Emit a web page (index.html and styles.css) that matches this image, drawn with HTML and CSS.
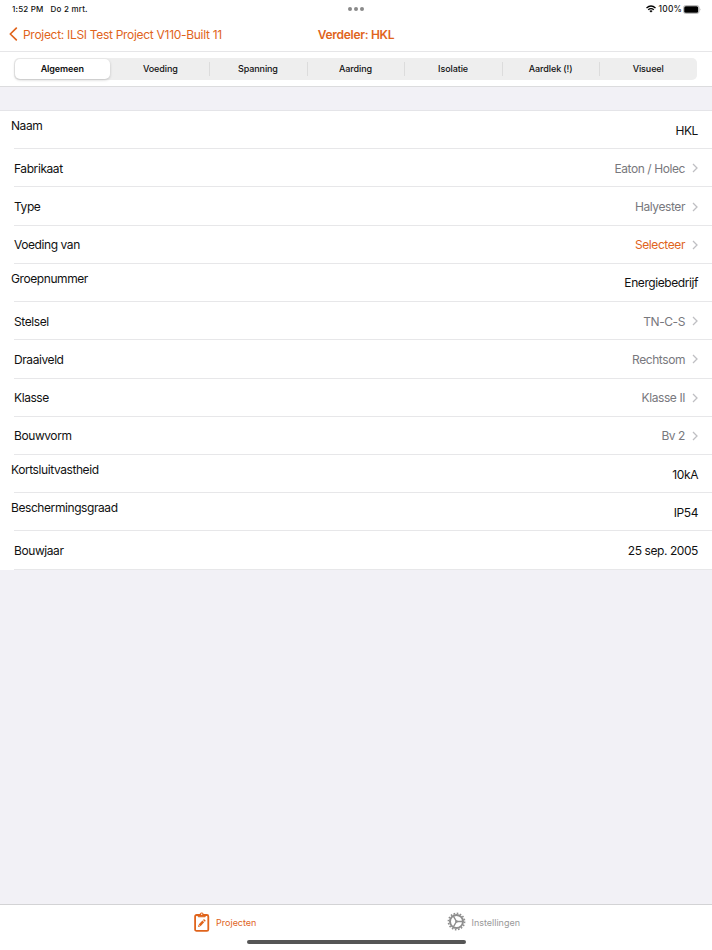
FILE: index.html
```html
<!DOCTYPE html>
<html lang="nl">
<head>
	<meta charset="UTF-8">
	<title>Verdeler: HKL</title>
	<link rel="stylesheet" href="styles.css">
</head>
<body>
	<div class="statusbar">
		<div class="time"><span class="clock">1:52 PM</span><span class="date">Do 2 mrt.</span></div>
		<div class="dots"><i></i><i></i><i></i></div>
		<div class="status">
			<svg class="wifi" width="10" height="8" viewBox="0 0 10 8" fill="none" stroke="#000" stroke-width="1.3">
				<path d="M0.5 3Q5 -1 9.5 3"/>
				<path d="M2.2 4.8Q5 2.4 7.8 4.8"/>
				<path d="M3.4 5.9Q5 4.7 6.6 5.9L5 7.6Z" fill="#000" stroke="none"/>
			</svg>
			<span class="percent">100%</span>
			<svg width="18" height="9" viewBox="0 0 18 9">
				<rect x="0.5" y="0.5" width="15.6" height="8" rx="2.2" fill="#fff" stroke="#aaa" stroke-width="0.8"/>
				<rect x="1.2" y="1.3" width="14" height="6.4" rx="1.5"/>
				<path d="M16.9 3.2Q18 4.5 16.9 5.8Z" fill="#999"/>
			</svg>
		</div>
	</div>
	<div class="navbar">
		<a href="#" class="back">
			<svg width="9" height="14" viewBox="0 0 9 14" fill="none" stroke="#e0641c" stroke-width="1.7" stroke-linecap="round" stroke-linejoin="round"><path d="M7.3 1.2L1.3 7L7.3 12.8"/></svg>
			<span>Project: ILSI Test Project V110-Built 11</span>
		</a>
		<h1>Verdeler: HKL</h1>
	</div>
	<div class="toolbar">
		<ul class="segments">
			<li class="cur">Algemeen</li>
			<li>Voeding</li>
			<li>Spanning</li>
			<li>Aarding</li>
			<li>Isolatie</li>
			<li>Aardlek (!)</li>
			<li>Visueel</li>
		</ul>
	</div>
	<div class="content">
		<ul class="list">
			<li class="field"><span>Naam</span><b>HKL</b></li>
			<li class="link"><span>Fabrikaat</span><b>Eaton / Holec</b><svg class="arrow" viewBox="0 0 6 10"><path d="M1 1L5 5L1 9"/></svg></li>
			<li class="link"><span>Type</span><b>Halyester</b><svg class="arrow" viewBox="0 0 6 10"><path d="M1 1L5 5L1 9"/></svg></li>
			<li class="link select"><span>Voeding van</span><b>Selecteer</b><svg class="arrow" viewBox="0 0 6 10"><path d="M1 1L5 5L1 9"/></svg></li>
			<li class="field"><span>Groepnummer</span><b>Energiebedrijf</b></li>
			<li class="link"><span>Stelsel</span><b>TN-C-S</b><svg class="arrow" viewBox="0 0 6 10"><path d="M1 1L5 5L1 9"/></svg></li>
			<li class="link"><span>Draaiveld</span><b>Rechtsom</b><svg class="arrow" viewBox="0 0 6 10"><path d="M1 1L5 5L1 9"/></svg></li>
			<li class="link"><span>Klasse</span><b>Klasse II</b><svg class="arrow" viewBox="0 0 6 10"><path d="M1 1L5 5L1 9"/></svg></li>
			<li class="link"><span>Bouwvorm</span><b>Bv 2</b><svg class="arrow" viewBox="0 0 6 10"><path d="M1 1L5 5L1 9"/></svg></li>
			<li class="field"><span>Kortsluitvastheid</span><b>10kA</b></li>
			<li class="field"><span>Beschermingsgraad</span><b>IP54</b></li>
			<li class="date"><span>Bouwjaar</span><b>25 sep. 2005</b></li>
		</ul>
	</div>
	<div class="tabbar">
		<a href="#" class="tab cur">
			<svg width="16" height="20" viewBox="0 0 16 20" fill="none" stroke="#e0641c" stroke-width="1.8">
				<rect x="1.1" y="3" width="13.2" height="15.8" rx="1.4"/>
				<path d="M4.2 2.6H6Q6 0.9 7.7 0.9T9.4 2.6H11.2V4.8H4.2Z" fill="#e0641c" stroke-width="0.9"/>
				<circle cx="7.7" cy="2.3" r="0.7" fill="#fff" stroke="none"/>
				<path d="M5.6 13.3L9.3 9.4" stroke-width="2.5"/>
				<path d="M9.9 8.8L10.9 7.8" stroke-width="2.5"/>
				<path d="M4 15L4.5 12.7L6.2 14.4Z" fill="#e0641c" stroke="none"/>
			</svg>
			<span>Projecten</span>
		</a>
		<a href="#" class="tab">
			<svg width="19" height="19" viewBox="-9.5 -9.5 19 19" fill="none" stroke="#8e8e8e">
				<circle r="8.1" stroke-width="1.6" stroke-dasharray="1.59 1.59"/>
				<circle r="6.5" stroke-width="2"/>
				<path d="M0 0H6M0 0L-3 -5.2M0 0L-3 5.2" stroke-width="1.4"/>
				<circle r="1.3" fill="#8e8e8e" stroke="none"/>
			</svg>
			<span>Instellingen</span>
		</a>
		<div class="home"></div>
	</div>
</body>
</html>
```
FILE: styles.css
```css
*{
	margin: 0;
	padding: 0;
	box-sizing: border-box;
}
body{
	height: 950px;
	display: flex;
	flex-direction: column;
	overflow: hidden;
	background-color: #fff;
	color: #111;
	font-family: Inter, "Liberation Sans", sans-serif;
	font-size: 12px;
}
ul{
	list-style: none;
}
a{
	color: #e0641c;
	text-decoration: none;
}
svg{
	display: block;
	flex: none;
}
.statusbar{
	height: 18px;
	padding: 0 12px;
	display: grid;
	grid-template-columns: 1fr auto 1fr;
	align-items: center;
	font-size: 8px;
	font-weight: 500;
	letter-spacing: .2px;
	line-height: 16px;
}
.statusbar .date{
	margin-left: 7px;
}
.dots{
	display: flex;
	gap: 2px;
}
.dots i{
	width: 4px;
	height: 4px;
	border-radius: 50%;
	background-color: #8a8a8a;
}
.status{
	margin-right: -1px;
	display: flex;
	align-items: center;
	justify-content: flex-end;
}
.status .percent{
	margin: 0 1px 0 3px;
	font-size: 8.4px;
}
.navbar{
	height: 34px;
	padding: 0 9px 1px;
	display: grid;
	grid-template-columns: 1fr auto 1fr;
	align-items: center;
	border-bottom: 1px solid #e6e6e8;
	letter-spacing: -.3px;
}
.navbar .back{
	display: flex;
	align-items: center;
	gap: 5px;
	white-space: nowrap;
}
.navbar h1{
	color: #e0641c;
	font-size: 12px;
	font-weight: 600;
}
.toolbar{
	height: 35px;
	padding: 6px 15px 0 14px;
	border-bottom: 1px solid #dcdcde;
}
.segments{
	height: 22px;
	display: grid;
	grid-template-columns: repeat(7, 1fr);
	border-radius: 5px;
	background-color: #eee;
}
.segments li{
	height: 14px;
	margin-top: 4px;
	padding-right: 1px;
	border-left: 1px solid #dcdcdc;
	font-size: 9px;
	font-weight: 500;
	letter-spacing: -.1px;
	line-height: 14px;
	text-align: center;
}
.segments li.cur{
	height: 20px;
	margin: 1px 2px 1px 1px;
	padding: 0;
	border: 0;
	border-radius: 5px;
	background-color: #fff;
	box-shadow: 0 1px 3px rgba(0,0,0,.2);
	font-weight: 600;
	line-height: 20px;
}
.segments li.cur + li{
	border-color: transparent;
}
.content{
	flex: 1;
	padding-top: 23px;
	background-color: #f2f1f6;
}
.list{
	padding-left: 14px;
	border-top: 1px solid #e4e4e8;
	background-color: #fff;
	letter-spacing: -.42px;
}
.list li{
	height: 38.23px;
	padding: 1px 14px 0 0;
	display: flex;
	align-items: center;
	border-bottom: 1px solid #e7e7e9;
}
.list b{
	margin-left: auto;
	font-weight: 400;
}
.list .field span{
	margin: -9px 0 0 -3px;
}
.list .link b{
	color: #78787d;
}
.list .select b{
	color: #e0641c;
}
.arrow{
	width: 6px;
	height: 10px;
	margin-left: 7px;
	fill: none;
	stroke: #bfbfc3;
	stroke-width: 1.3;
}
.tabbar{
	height: 46px;
	padding: 0 99px 0 96px;
	display: grid;
	grid-template-columns: 1fr 1fr;
	grid-template-rows: 35px 4px;
	border-top: 1px solid #d3d3d5;
	font-size: 9px;
}
.tab{
	display: flex;
	align-items: center;
	justify-content: center;
	gap: 6px;
}
.tab svg{
	margin-top: -2px;
}
.tab:not(.cur){
	gap: 5px;
	color: #999;
}
.home{
	grid-column: 1 / 3;
	justify-self: center;
	width: 219px;
	height: 4px;
	margin-left: 3px;
	border-radius: 2px;
	background-color: #555;
}
```
